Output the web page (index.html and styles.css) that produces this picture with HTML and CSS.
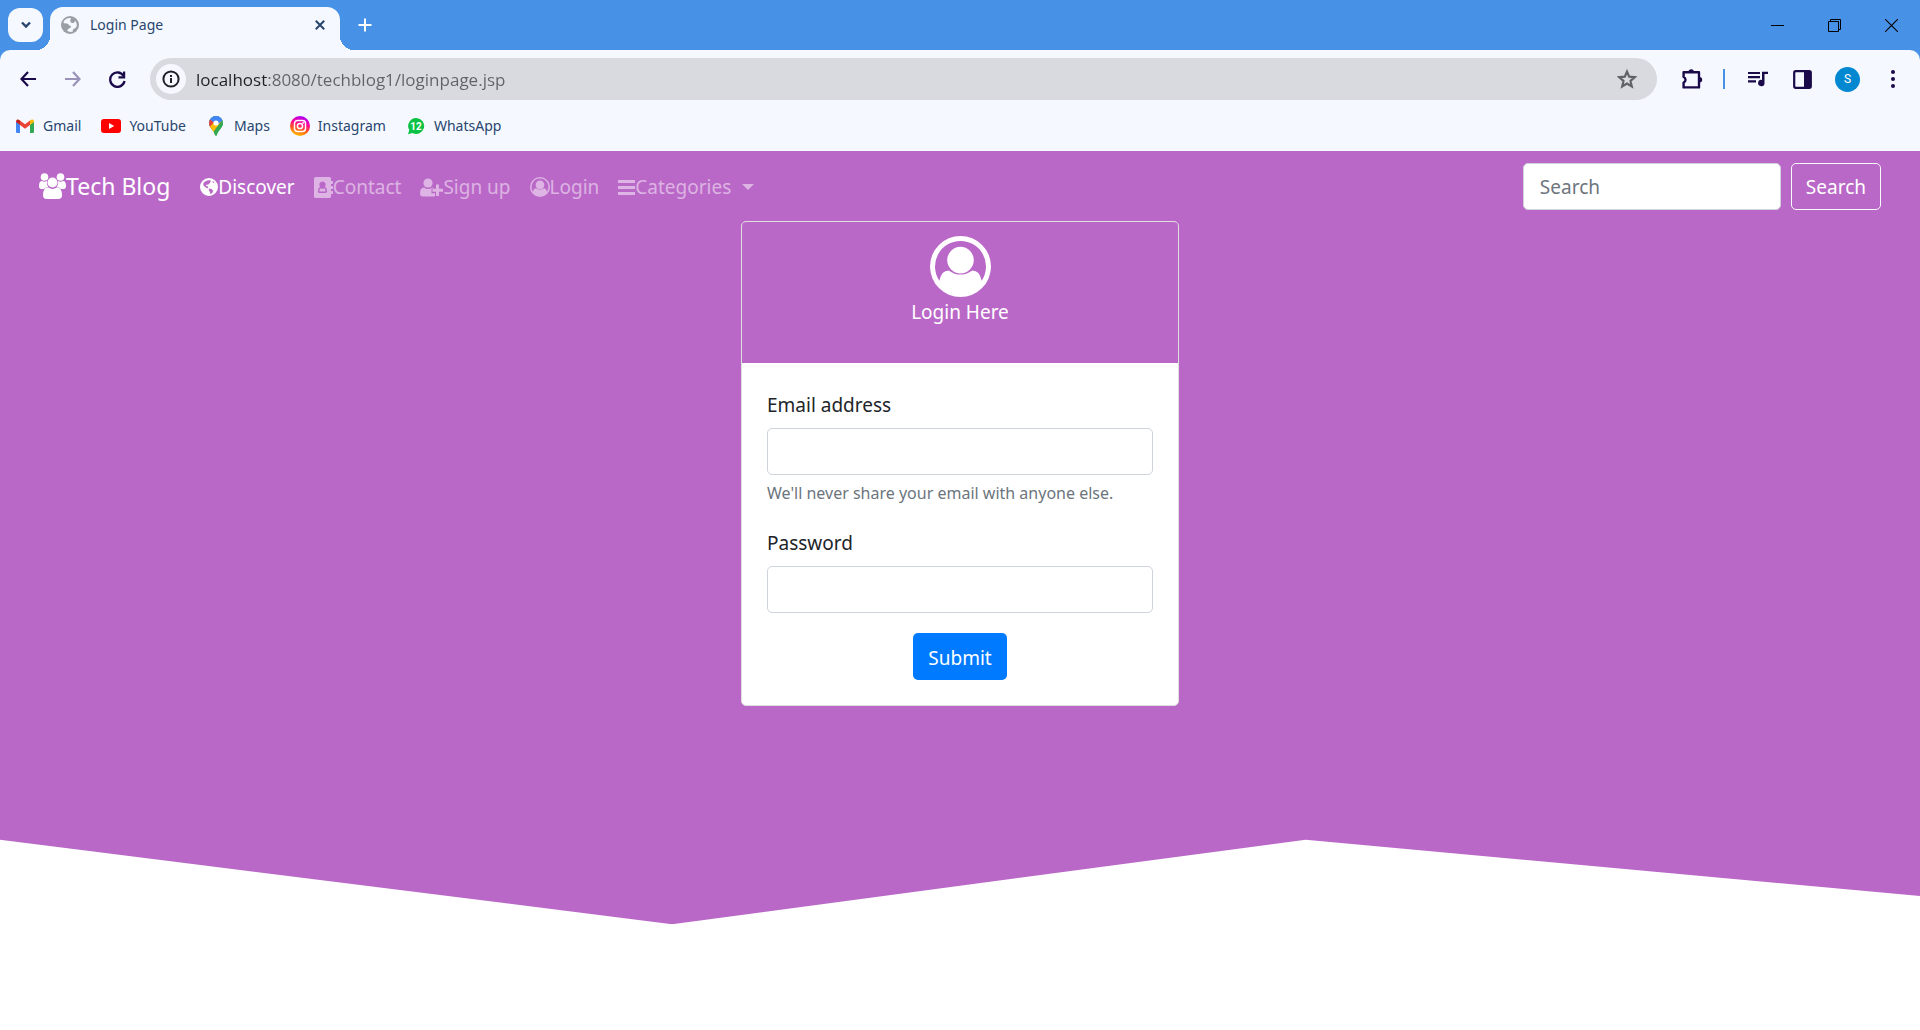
FILE: index.html
```html
<!DOCTYPE html>
<html lang="en">
<head>
<meta charset="utf-8">
<meta name="viewport" content="width=device-width, initial-scale=1">
<title>Login Page</title>
<link rel="stylesheet" href="styles.css">
</head>
<body>
<header class="browser">
  <div class="tabstrip">
    <button class="tab-search" aria-label="Search tabs"><svg width="12" height="8" viewBox="0 0 12 8"><path d="M2 1.5l4 4 4-4" fill="none" stroke="currentColor" stroke-width="2.4"/></svg></button>
    <div class="tab">
      <svg class="tab-icon" width="18" height="18" viewBox="0 0 18 18"><circle cx="9" cy="9" r="9" fill="#9a9fa5"/><path d="M10 2C6.500 1.500 3.500 3 2.300 6.500c1.200 1.200 3 1 4.200 1.200 1.500.3 1.200 1.800 2.700 2 1.600.3.800 2.300-.9 2.500-1.300.2-.7 1.800-2.500 1.800 1.400 2 4 2.300 6 1.400-.4-1.900.6-2.600 1.700-3 1.200-.4 2-1.200 2.200-2.400.3-1.700-.2-3.500-1.300-5-1 .4-1 1.800-2.300 2-1.300.1-2.900-.6-2.800-2 0-1.400.4-2 .7-3z" fill="#f5f8fe"/></svg>
      <span class="tab-title">Login Page</span>
      <button class="tab-close" aria-label="Close tab"><svg width="10" height="10" viewBox="0 0 10 10"><path d="M.8.800l8.400 8.400M9.200.8L.8 9.200" stroke="currentColor" stroke-width="2"/></svg></button>
    </div>
    <button class="tab-new" aria-label="New tab"><svg width="14" height="14" viewBox="0 0 14 14"><path d="M7 .5v13M.5 7h13" stroke="currentColor" stroke-width="2"/></svg></button>
    <div class="window-controls">
      <button aria-label="Minimize"><svg width="13" height="13" viewBox="0 0 13 13"><path d="M0 6.500h13" stroke="currentColor"/></svg></button>
      <button aria-label="Restore"><svg width="13" height="13" viewBox="0 0 13 13"><path d="M.5 2.500h10v10H.5zM2.500 2.500v-2h10v10h-2" fill="none" stroke="currentColor"/></svg></button>
      <button aria-label="Close"><svg width="13" height="13" viewBox="0 0 13 13"><path d="M0 0l13 13M13 0L0 13" stroke="currentColor" stroke-width="1.100"/></svg></button>
    </div>
  </div>
  <div class="toolbar">
    <button class="tool" aria-label="Back"><svg width="16" height="16" viewBox="0 0 16 16"><path d="M8 1L1.500 8 8 15M1.500 8H16" fill="none" stroke="currentColor" stroke-width="2.200"/></svg></button>
    <button class="tool tool-off" aria-label="Forward"><svg width="16" height="16" viewBox="0 0 16 16"><path d="M8 1l6.500 7L8 15M14.500 8H0" fill="none" stroke="currentColor" stroke-width="2.200"/></svg></button>
    <button class="tool" aria-label="Reload"><svg width="17" height="17" viewBox="0 0 17 17"><path d="M14.500 4.800A7.200 7.200 0 1 0 15.500 10" fill="none" stroke="currentColor" stroke-width="2.300"/><path d="M14 .5h2.200v7H9.500V5.200H14z" fill="currentColor"/></svg></button>
    <div class="address">
      <button class="site-info" aria-label="Site information"><svg width="18" height="18" viewBox="0 0 18 18"><circle cx="9" cy="9" r="7.600" fill="none" stroke="currentColor" stroke-width="2"/><path d="M8 8h2v5H8zM8 5h2v2H8z" fill="currentColor"/></svg></button>
      <input class="url" type="text" aria-label="Address" value="localhost:8080/techblog1/loginpage.jsp">
      <button class="star" aria-label="Bookmark this tab"><svg width="20" height="20" viewBox="0 0 20 20"><path d="M10 2.600l2.200 5.100 5.500.5-4.200 3.700 1.300 5.500-4.800-2.900-4.800 2.900 1.300-5.500-4.200-3.700 5.500-.5z" fill="none" stroke="currentColor" stroke-width="2.200"/></svg></button>
    </div>
    <button class="tool" aria-label="Extensions"><svg width="22" height="22" viewBox="0 0 22 22"><path d="M2.600 4.200H18v15.200H2.600v-4.800a3 3 0 0 0 0-5.600z" fill="none" stroke="currentColor" stroke-width="2.400" stroke-linejoin="round"/><path d="M7.500 4a2.700 2.700 0 0 1 5.400 0zM18.500 9a2.700 2.700 0 0 1 0 5.400z" fill="currentColor"/></svg></button>
    <span class="divider"></span>
    <button class="tool" aria-label="Media"><svg width="20" height="16" viewBox="0 0 20 16"><path d="M0 2h12M0 6.200h12M0 10.400h8" stroke="currentColor" stroke-width="2.200"/><path d="M14 .8h6v2.300h-3.500v8.900a3.200 3.200 0 1 1-2.500-3.100z" fill="currentColor"/></svg></button>
    <button class="tool" aria-label="Side panel"><svg width="19" height="19" viewBox="0 0 19 19"><rect x="1.200" y="1.200" width="16.600" height="16.600" rx="1.500" fill="none" stroke="currentColor" stroke-width="2.200"/><path d="M11 1h7v17h-7z" fill="currentColor"/></svg></button>
    <button class="tool" aria-label="Profile"><span class="avatar">S</span></button>
    <button class="tool" aria-label="Menu"><svg width="4" height="18" viewBox="0 0 4 18"><g fill="currentColor"><circle cx="2" cy="2" r="2"/><circle cx="2" cy="9" r="2"/><circle cx="2" cy="16" r="2"/></g></svg></button>
  </div>
  <nav class="bookmarks" aria-label="Bookmarks">
    <a href="#"><svg width="20" height="20" viewBox="0 0 20 20"><path d="M1 5.500l4 3V17H2.200Q1 17 1 15.800z" fill="#4285f4"/><path d="M19 5.500l-4 3V17h2.800q1.200 0 1.200-1.200z" fill="#34a853"/><path d="M5 4.500l5 3.800 5-3.800v4.500l-5 3.800L5 9z" fill="#ea4335"/><path d="M1 5.500C1 3.300 3.300 3 4.500 4L5 4.400V9L1 6z" fill="#c5221f"/><path d="M19 5.500C19 3.300 16.700 3 15.500 4l-.5.4V9l4-3z" fill="#fbbc04"/></svg>Gmail</a>
    <a href="#"><svg width="20" height="20" viewBox="0 0 20 20"><rect y="3" width="20" height="14" rx="3" fill="#f00"/><path d="M8 7l5.200 3L8 13z" fill="#fff"/></svg>YouTube</a>
    <a href="#"><svg width="20" height="20" viewBox="0 0 20 20"><clipPath id="pin"><path d="M10 0a7 7 0 0 1 7 7c0 4.500-4.500 6.500-6 12q-1 2-2 0C7.500 13.500 3 11.500 3 7a7 7 0 0 1 7-7z"/></clipPath><g clip-path="url(#pin)"><path d="M0 0h20v20H0z" fill="#34a853"/><path d="M2 13L16 0H4L2 5z" fill="#4285f4"/><path d="M2 2l8 6-5 6-3-4z" fill="#ea4335"/><path d="M3 11.500L12.500 2 17 7l-9.500 10z" fill="#fbbc04"/><path d="M17 3v8l-9 9v-5z" fill="#34a853"/><path d="M7 0h7l3 4-5 4z" fill="#4285f4"/></g><circle cx="10" cy="7" r="2.600" fill="#fff"/></svg>Maps</a>
    <a href="#"><svg width="20" height="20" viewBox="0 0 20 20"><linearGradient id="insta" x1=".3" y1="1" x2=".6" y2="0"><stop offset="0" stop-color="#ffc800"/><stop offset=".35" stop-color="#ff5a1e"/><stop offset=".65" stop-color="#ff0094"/><stop offset="1" stop-color="#a800ff"/></linearGradient><circle cx="10" cy="10" r="10" fill="url(#insta)"/><g fill="none" stroke="#fff" stroke-width="1.500"><rect x="4.500" y="4.500" width="11" height="11" rx="3"/><circle cx="10" cy="10" r="2.600"/></g><circle cx="13.200" cy="6.800" r=".9" fill="#fff"/></svg>Instagram</a>
    <a href="#"><svg width="20" height="20" viewBox="0 0 20 20"><path d="M10.500 2a8 8 0 1 1-4 15.100L2 18.300l1.300-4.200A8 8 0 0 1 10.500 2z" fill="#0cc143"/><text x="10" y="14" class="badge-count">12</text></svg>WhatsApp</a>
  </nav>
</header>

<main class="page">
  <nav class="navbar" aria-label="Main">
    <a class="brand" href="#"><svg width="27" height="26" viewBox="0 0 27 26"><g fill="currentColor"><circle cx="5.500" cy="4" r="3.800"/><circle cx="21.500" cy="4" r="3.800"/><circle cx="13.500" cy="9.500" r="5"/><path d="M3 8q2.500 1.400 5 0-.9 3.300 1.200 6-2.700.2-4.200 2H3q-3 0-3-2.800Q0 8 3 8zM24 8q-2.500 1.400-5 0 .9 3.300-1.200 6 2.700.2 4.200 2h2q3 0 3-2.800Q27 8 24 8z"/><path d="M9 14.200q4.500 3.400 9 0 5 .3 5 8 0 3.800-3.800 3.800H7.800Q4 26 4 22.200q0-7.700 5-8z"/></g></svg>Tech Blog</a>
    <ul class="nav-links">
      <li><a class="active" href="#"><svg width="18" height="18" viewBox="0 0 18 18"><path fill-rule="evenodd" fill="currentColor" d="M9 0a9 9 0 1 1 0 18A9 9 0 0 1 9 0zM8 2.200L5.500 3.200 3.500 4.800 3.300 7l1 1.600 1.900.8.800 1.200 1.300-.8-.6-1.500-1.400-.2-.4-1 1.300-.7.900.6.500-1 1.800-1.200-.5-.9 1.200-.7-1-.9zM12 3l1 .9-.3 1 1.700-.1-.9-1.200zM9 10.500l2.400.6 1.800 1.300-.8 2.300-2 1.500-.5-2.300L8.700 12z"/></svg>Discover</a></li>
      <li><a href="#"><svg width="19" height="21" viewBox="0 0 19 21"><path fill-rule="evenodd" fill="currentColor" d="M1.600 0H15.400Q17 0 17 1.600V4h1.500q.5 0 .5.500v2q0 .5-.5.500H17v2h1.500q.5 0 .5.500v2q0 .5-.5.500H17v2h1.500q.5 0 .5.500v2q0 .5-.5.500H17v2.400Q17 21 15.400 21H1.600Q0 21 0 19.400V1.600Q0 0 1.600 0zM8.500 4.500a3.200 3.200 0 0 0-2.300 5.400Q4 10.500 4 14.500 4 16 5.500 16h6q1.500 0 1.500-1.500 0-4-2.200-4.600A3.200 3.200 0 0 0 8.500 4.500zM6.800 11.300q1.700 1 3.400 0 1.400.5 1.400 3.300H5.400q0-2.800 1.400-3.300z"/></svg>Contact</a></li>
      <li><a href="#"><svg width="23" height="19" viewBox="0 0 23 19"><g fill="currentColor"><circle cx="8" cy="5" r="4.600"/><path d="M4 9.500q4 3 8 0 1.300 0 2 .700h-2.500v5H15V18q-.6.500-1.700.5H3Q0 18.500 0 15.500 0 9.500 4 9.500z"/><path d="M16 6.500h3v4.200h4v3h-4V18h-3v-4.300h-3.500v-3H16z"/></g></svg>Sign up</a></li>
      <li><a href="#"><svg width="20" height="20" viewBox="0 0 62 62"><g fill="currentColor"><path fill-rule="evenodd" d="M31 0a31 31 0 1 1 0 62 31 31 0 0 1 0-62zm0 5a26 26 0 0 0-21.500 40.500Q11.500 35 19 35q12 8.500 24 0 7.500 0 9.500 10.500A26 26 0 0 0 31 5z"/><circle cx="31" cy="24.500" r="13.500"/></g></svg>Login</a></li>
      <li><a href="#"><svg width="17" height="20" viewBox="0 0 17 20"><path d="M0 4.500h17M0 10.500h17M0 16.500h17" stroke="currentColor" stroke-width="3"/></svg>Categories<span class="caret"></span></a></li>
    </ul>
    <form class="search" role="search">
      <input class="field" type="search" placeholder="Search" aria-label="Search">
      <button class="btn btn-outline" type="button">Search</button>
    </form>
  </nav>

  <section class="banner">
    <div class="card">
      <div class="card-header">
        <svg width="61" height="61" viewBox="0 0 62 62"><g fill="currentColor"><path fill-rule="evenodd" d="M31 0a31 31 0 1 1 0 62 31 31 0 0 1 0-62zm0 5a26 26 0 0 0-21.500 40.500Q11.500 35 19 35q12 8.500 24 0 7.500 0 9.500 10.500A26 26 0 0 0 31 5z"/><circle cx="31" cy="24.500" r="13.500"/></g></svg>
        <p>Login Here</p>
      </div>
      <form class="card-body">
        <div class="group">
          <label for="email">Email address</label>
          <input class="field" id="email" type="email" aria-describedby="email-help">
          <small id="email-help">We'll never share your email with anyone else.</small>
        </div>
        <div class="group">
          <label for="password">Password</label>
          <input class="field" id="password" type="password">
        </div>
        <button class="btn btn-primary" type="button">Submit</button>
      </form>
    </div>
  </section>
</main>
</body>
</html>
```
FILE: styles.css
```css
* {
  box-sizing: border-box;
}

body {
  margin: 0;
  min-height: 100vh;
  display: flex;
  flex-direction: column;
  background: #fff;
  color: #212529;
  font: 19px/30px "Noto Sans", sans-serif;
}

button,
input {
  font: inherit;
  color: inherit;
}

button {
  padding: 0;
  border: 0;
  background: none;
}

a {
  color: inherit;
  text-decoration: none;
}

svg {
  display: block;
  flex: none;
}

/* Browser window */
.browser {
  background: #4791e7;
  color: #28456e;
  font-size: 14px;
  line-height: 20px;
}

.tabstrip {
  display: flex;
  align-items: center;
  height: 50px;
  padding-left: 8px;
}

.tab-search {
  display: grid;
  place-items: center;
  width: 35px;
  height: 34px;
  border-radius: 12px;
  background: #f5f9ff;
}

.tab {
  position: relative;
  display: flex;
  align-items: center;
  align-self: flex-end;
  gap: 11px;
  width: 290px;
  height: 43px;
  margin-left: 7px;
  padding: 0 15px 7px 11px;
  border-radius: 13px 13px 0 0;
  background: #f5f9ff;
}

.tab::before,
.tab::after {
  content: "";
  position: absolute;
  bottom: 0;
  width: 14px;
  height: 14px;
}

.tab::before {
  right: 100%;
  background: radial-gradient(circle at 0 0, transparent 14px, #f5f9ff 14px);
}

.tab::after {
  left: 100%;
  background: radial-gradient(circle at 100% 0, transparent 14px, #f5f9ff 14px);
}

.tab-title {
  flex: 1;
}

.tab-new {
  margin-left: 18px;
  color: #fff;
}

.window-controls {
  display: flex;
  margin-left: auto;
  color: #000;
}

.window-controls button {
  display: grid;
  place-items: center;
  width: 57px;
  height: 48px;
}

.toolbar {
  display: flex;
  align-items: center;
  height: 58px;
  padding: 0 5px;
  border-radius: 10px 10px 0 0;
  background: #f5f9ff;
  color: #1a0a4a;
}

.tool {
  display: grid;
  place-items: center;
  width: 45px;
  height: 45px;
}

.tool-off {
  color: #9a92b8;
}

.address {
  flex: 1;
  display: flex;
  align-items: center;
  height: 42px;
  margin: 0 12px 0 10px;
  padding: 0 20px 0 6px;
  border-radius: 21px;
  background: #d9dadf;
  color: #202124;
}

.site-info {
  display: grid;
  place-items: center;
  width: 30px;
  height: 30px;
  border-radius: 50%;
  background: #f5f9ff;
}

/* The host is darker than the rest of the address */
.url {
  flex: 1;
  height: 30px;
  margin-left: 10px;
  padding: 0;
  border: 0;
  background: linear-gradient(to right, #202124 72px, #5f6368 72px);
  background-clip: text;
  color: transparent;
  font-size: 17px;
  font-family: "Open Sans", sans-serif;
}

.star {
  color: #5f6368;
}

.divider {
  width: 2px;
  height: 20px;
  margin: 0 10px 0 9px;
  background: #4791e7;
}

.avatar {
  width: 25px;
  height: 25px;
  border-radius: 50%;
  background: #0288d1;
  color: #fff;
  font: 12px/25px Roboto, sans-serif;
}

.bookmarks {
  display: flex;
  gap: 20px;
  padding: 8px 15px 15px;
  background: #f5f9ff;
}

.bookmarks a {
  display: flex;
  align-items: center;
  gap: 8px;
}

.badge-count {
  fill: #fff;
  font: bold 10px Roboto, sans-serif;
  text-anchor: middle;
}

/* Page */
.page {
  flex: 1;
  display: flex;
  flex-direction: column;
}

.navbar {
  display: flex;
  align-items: center;
  height: 70px;
  padding: 0 39px;
  background: #ba68c8;
  color: #fff;
}

.brand {
  display: flex;
  align-items: center;
  margin-right: 30px;
  font-size: 23px;
}

.nav-links {
  display: flex;
  gap: 19px;
  margin: 0;
  padding: 2px 0 0;
  list-style: none;
}

.nav-links a {
  display: flex;
  align-items: center;
  color: rgba(255, 255, 255, 0.5);
}

.nav-links .active {
  color: #fff;
}

.caret {
  margin-left: 11px;
  border: 6px solid transparent;
  border-top-color: currentColor;
  border-bottom: 0;
}

.search {
  display: flex;
  gap: 10px;
  margin-left: auto;
}

.field {
  display: block;
  width: 100%;
  height: 47px;
  padding: 2px 16px 0;
  border: 1px solid #ced4da;
  border-radius: 5px;
  background: #fff;
  color: #495057;
}

.field::placeholder {
  color: #6c757d;
}

.search .field {
  width: 258px;
}

.btn {
  height: 47px;
  padding: 2px 14px 0;
  border: 1px solid transparent;
  border-radius: 5px;
  color: #fff;
}

.btn-outline {
  border-color: #f8f9fa;
}

.btn-primary {
  display: block;
  margin: 0 auto;
  background: #007bff;
}

.banner {
  min-height: calc((100vh - 151px) * 0.8);
  background: #ba68c8;
  clip-path: polygon(0 0, 100% 0, 100% 96%, 68% 88%, 35% 100%, 0 88%);
}

.card {
  width: 438px;
  max-width: 100%;
  margin: 0 auto;
  border: 1px solid #dfdfdf;
  border-radius: 5px;
  background: #fff;
}

.card-header {
  display: flex;
  flex-direction: column;
  align-items: center;
  padding: 14px 25px 36px;
  border-radius: 4px 4px 0 0;
  background: #ba68c8;
  color: #fff;
}

.card-header p {
  margin: 0;
}

.card-body {
  padding: 25px;
}

.group {
  margin-bottom: 20px;
}

.group label {
  display: block;
  padding-top: 2px;
  margin-bottom: 8px;
}

.group small {
  display: block;
  margin-top: 6px;
  color: #6c757d;
  font-size: 16px;
  line-height: 25px;
}
```
